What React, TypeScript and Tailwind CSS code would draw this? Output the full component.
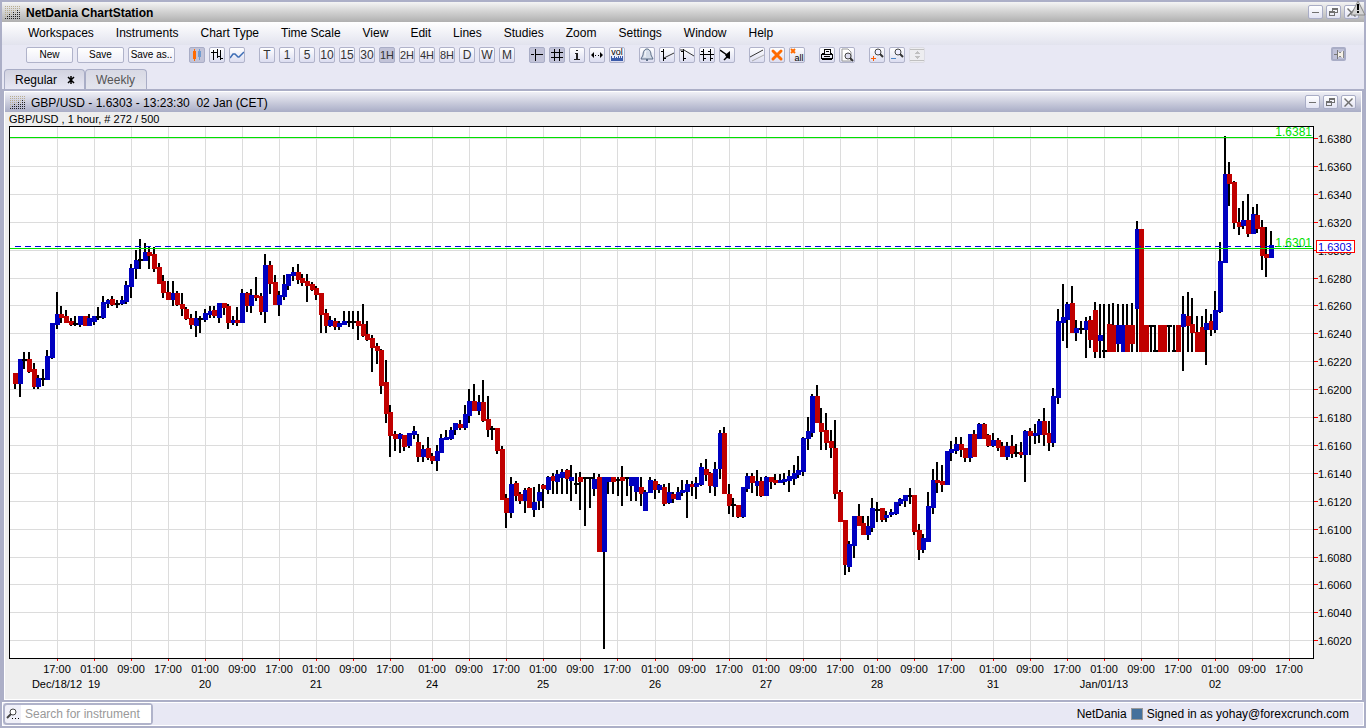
import { useState } from 'react';
import type { ReactNode } from 'react';
import clsx from 'clsx';

// [high, low, body top, body bottom, direction] in chart units, one per hour
type Candle = [number, number, number, number, number];

const candles: Candle[] = [
  [373, 389, 373, 384, -1], [359, 397, 359, 384, 1], [352, 369, 359, 361, 0], [352, 373, 359, 372, -1],
  [363, 389, 369, 387, -1], [375, 389, 378, 387, 1], [369, 386, 378, 380, 0], [350, 380, 356, 380, 1],
  [323, 359, 323, 358, 1], [292, 329, 314, 325, 1], [306, 323, 314, 318, -1], [310, 323, 316, 323, -1],
  [318, 326, 321, 325, -1], [316, 326, 323, 325, 0], [316, 327, 316, 325, 1], [316, 326, 316, 326, -1],
  [314, 326, 318, 326, 1], [316, 325, 316, 322, 1], [307, 320, 316, 318, 0], [296, 319, 302, 318, 1],
  [299, 308, 300, 304, 1], [296, 306, 299, 305, -1], [300, 308, 303, 305, 0], [296, 305, 300, 304, 1],
  [281, 304, 285, 302, 1], [264, 298, 268, 287, 1], [250, 279, 260, 269, 1], [239, 269, 259, 261, 0],
  [243, 261, 252, 261, 1], [247, 269, 252, 256, -1], [247, 272, 254, 269, -1], [263, 284, 267, 284, -1],
  [275, 298, 281, 293, -1], [281, 300, 292, 300, -1], [281, 306, 293, 300, 1], [291, 306, 293, 305, -1],
  [293, 316, 304, 309, -1], [307, 320, 309, 319, -1], [314, 329, 318, 325, -1], [311, 337, 318, 326, 1],
  [316, 333, 318, 320, 0], [309, 322, 313, 320, 1], [306, 318, 311, 315, 1], [306, 318, 310, 316, -1],
  [303, 323, 303, 318, 1], [303, 315, 303, 308, -1], [304, 329, 306, 323, -1], [316, 325, 320, 323, 1],
  [307, 326, 320, 323, -1], [289, 323, 293, 323, 1], [292, 312, 293, 306, -1], [289, 313, 295, 306, 1],
  [277, 301, 295, 298, -1], [293, 315, 296, 312, -1], [254, 323, 265, 312, 1], [261, 294, 265, 284, -1],
  [275, 305, 282, 305, -1], [291, 316, 295, 305, 1], [275, 300, 284, 297, 1], [274, 290, 274, 286, 1],
  [267, 281, 272, 276, 1], [264, 284, 272, 280, -1], [274, 286, 278, 283, -1], [274, 302, 281, 286, -1],
  [282, 291, 284, 290, -1], [286, 300, 288, 295, -1], [293, 333, 293, 315, -1], [309, 333, 313, 326, -1],
  [316, 327, 320, 326, 1], [318, 330, 321, 327, -1], [321, 330, 323, 327, 1], [311, 325, 321, 325, 1],
  [311, 327, 321, 323, 0], [311, 329, 321, 323, 0], [311, 340, 321, 326, -1], [304, 337, 324, 336, -1],
  [321, 341, 334, 340, -1], [335, 372, 338, 348, -1], [343, 364, 346, 351, -1], [349, 394, 350, 386, -1],
  [360, 423, 382, 414, -1], [405, 457, 412, 436, -1], [431, 451, 434, 439, -1], [433, 453, 434, 439, 1],
  [435, 451, 435, 447, -1], [433, 448, 433, 446, 1], [426, 439, 431, 435, 1], [434, 462, 442, 457, -1],
  [445, 462, 449, 457, 1], [437, 460, 448, 458, -1], [453, 464, 456, 461, -1], [445, 471, 451, 461, 1],
  [434, 453, 438, 453, 1], [430, 440, 437, 440, 1], [427, 440, 430, 439, 1], [423, 435, 423, 430, 1],
  [420, 430, 424, 428, -1], [405, 430, 414, 428, 1], [389, 423, 401, 416, 1], [384, 411, 401, 411, -1],
  [395, 415, 402, 411, 1], [380, 422, 402, 421, -1], [396, 437, 419, 430, -1], [426, 440, 428, 430, 0],
  [428, 454, 428, 451, -1], [446, 500, 449, 500, -1], [494, 528, 498, 513, -1], [477, 518, 484, 513, 1],
  [481, 501, 483, 496, -1], [492, 504, 494, 501, -1], [488, 513, 490, 501, 1], [487, 508, 488, 508, -1],
  [487, 517, 502, 510, 1], [484, 510, 492, 501, 1], [484, 508, 485, 489, -1], [476, 494, 477, 490, 1],
  [473, 494, 476, 481, -1], [470, 494, 474, 482, 1], [469, 494, 472, 478, 1], [469, 494, 470, 479, -1],
  [465, 501, 477, 481, 1], [473, 494, 483, 485, 0], [472, 510, 477, 482, -1], [477, 526, 477, 479, 0],
  [477, 508, 477, 479, 0], [473, 496, 479, 489, 1], [474, 552, 477, 552, -1], [477, 649, 477, 552, 1],
  [477, 494, 477, 482, 1], [477, 494, 477, 482, -1], [477, 496, 479, 481, 0], [466, 506, 477, 481, -1],
  [477, 496, 477, 479, 0], [477, 501, 477, 486, 1], [477, 501, 477, 492, 1], [477, 506, 487, 494, -1],
  [490, 511, 492, 511, 1], [477, 493, 480, 493, 1], [479, 499, 481, 490, -1], [484, 493, 485, 490, 1],
  [484, 506, 487, 504, -1], [483, 504, 492, 503, 1], [492, 503, 494, 499, -1], [487, 500, 492, 500, 1],
  [480, 496, 490, 493, 1], [480, 518, 484, 492, 1], [481, 496, 484, 487, -1], [477, 499, 483, 487, 1],
  [463, 486, 467, 485, 1], [459, 481, 469, 475, -1], [472, 493, 473, 486, -1], [462, 496, 469, 487, 1],
  [430, 479, 433, 469, 1], [427, 494, 433, 494, -1], [484, 514, 494, 506, -1], [498, 517, 504, 506, 0],
  [505, 518, 505, 517, -1], [487, 518, 487, 517, 1], [473, 492, 476, 489, 1], [473, 493, 476, 483, -1],
  [470, 496, 481, 486, 1], [477, 497, 481, 496, -1], [476, 496, 477, 496, 1], [477, 489, 477, 482, -1],
  [474, 485, 480, 483, -1], [474, 483, 480, 483, 1], [473, 485, 479, 482, 1], [470, 492, 476, 481, 1],
  [465, 485, 473, 479, 1], [456, 478, 470, 475, 1], [437, 476, 438, 472, 1], [417, 450, 431, 439, 1],
  [394, 437, 396, 433, 1], [385, 423, 396, 423, -1], [408, 450, 423, 432, -1], [413, 450, 430, 443, -1],
  [430, 458, 441, 448, -1], [420, 499, 448, 494, -1], [490, 522, 492, 522, -1], [520, 575, 520, 565, -1],
  [541, 572, 544, 567, 1], [516, 558, 516, 546, 1], [504, 526, 516, 526, -1], [516, 535, 523, 535, -1],
  [516, 540, 526, 535, 1], [498, 532, 508, 528, 1], [502, 522, 509, 511, 0], [508, 522, 508, 520, -1],
  [511, 522, 515, 518, 1], [509, 517, 512, 515, 1], [502, 515, 502, 514, 1], [498, 506, 499, 504, 1],
  [495, 507, 495, 501, 1], [488, 504, 495, 497, 0], [495, 535, 495, 532, -1], [524, 560, 530, 550, -1],
  [534, 553, 538, 550, 1], [492, 542, 506, 542, 1], [469, 514, 480, 508, 1], [462, 493, 480, 483, -1],
  [465, 492, 481, 485, -1], [451, 485, 451, 485, 1], [441, 461, 449, 453, 1], [437, 454, 444, 451, 1],
  [437, 457, 444, 450, -1], [448, 462, 448, 458, -1], [434, 462, 434, 458, 1], [430, 457, 434, 457, -1],
  [423, 439, 424, 439, 1], [423, 439, 424, 439, -1], [434, 447, 435, 446, -1], [433, 447, 440, 446, 1],
  [438, 451, 440, 448, -1], [442, 457, 446, 457, -1], [442, 460, 446, 457, 1], [435, 458, 446, 454, -1],
  [444, 457, 452, 454, 0], [442, 458, 452, 455, -1], [430, 482, 431, 455, 1], [428, 455, 431, 436, -1],
  [424, 444, 433, 436, 1], [419, 443, 421, 435, 1], [408, 446, 421, 435, -1], [421, 451, 433, 443, -1],
  [388, 447, 396, 443, 1], [309, 404, 321, 398, 1], [284, 341, 317, 323, 1], [302, 348, 304, 320, 1],
  [286, 333, 303, 333, -1], [320, 341, 328, 333, 1], [321, 334, 328, 330, 0], [317, 358, 321, 330, 1],
  [316, 348, 320, 340, -1], [302, 358, 310, 352, -1], [304, 358, 335, 341, 1], [304, 358, 350, 352, 0],
  [304, 352, 324, 352, -1], [303, 352, 325, 352, -1], [304, 352, 325, 344, 1], [304, 352, 325, 352, 1],
  [304, 352, 325, 352, -1], [303, 352, 325, 344, -1], [221, 352, 229, 309, 1], [229, 352, 229, 352, -1],
  [325, 352, 325, 352, -1], [325, 352, 325, 327, 0], [325, 352, 350, 352, 0], [325, 352, 325, 352, -1],
  [325, 352, 325, 352, -1], [325, 352, 325, 327, 0], [325, 352, 350, 352, 0], [325, 352, 325, 352, -1],
  [296, 371, 314, 327, 1], [292, 352, 316, 326, -1], [298, 352, 324, 333, -1], [316, 352, 332, 352, -1],
  [316, 352, 327, 352, -1], [309, 365, 323, 330, 1], [314, 336, 321, 330, -1], [291, 333, 310, 330, 1],
  [242, 313, 261, 312, 1], [136, 263, 174, 263, 1], [162, 206, 174, 184, -1], [181, 229, 182, 223, -1],
  [208, 235, 222, 227, -1], [201, 229, 220, 226, 1], [194, 237, 220, 234, -1], [207, 234, 214, 234, 1],
  [204, 233, 215, 229, -1], [220, 270, 227, 256, -1], [227, 277, 254, 258, -1], [231, 258, 245, 258, 1],
];

const prices = [
  '1.6380', '1.6360', '1.6340', '1.6320', '1.6300', '1.6280', '1.6260', '1.6240', '1.6220', '1.6200',
  '1.6180', '1.6160', '1.6140', '1.6120', '1.6100', '1.6080', '1.6060', '1.6040', '1.6020',
];

const timeTicks = [
  57, 94, 131, 168, 205, 242, 279, 316, 353, 390, 432, 469, 506, 543, 580, 617, 655, 692, 729, 766, 803,
  840, 877, 914, 951, 993, 1030, 1067, 1104, 1141, 1178, 1215, 1252, 1289,
];
const hours = ['17:00', '01:00', '09:00'];

const dates = [
  { x: 57, label: 'Dec/18/12' },
  { x: 94, label: '19' },
  { x: 205, label: '20' },
  { x: 316, label: '21' },
  { x: 432, label: '24' },
  { x: 543, label: '25' },
  { x: 655, label: '26' },
  { x: 766, label: '27' },
  { x: 877, label: '28' },
  { x: 993, label: '31' },
  { x: 1104, label: 'Jan/01/13' },
  { x: 1215, label: '02' },
];

const priceY = (i: number) => Math.round(138 + i * 27.9);
const candleX = (i: number) => Math.round(13 + i * 4.635);
const fills: Record<string, string> = { '1': '#0000c0', '-1': '#c00000', '0': '#000' };

const menus = [
  'Workspaces', 'Instruments', 'Chart Type', 'Time Scale', 'View', 'Edit',
  'Lines', 'Studies', 'Zoom', 'Settings', 'Window', 'Help',
];

const timeScales = ['T', '1', '5', '10', '15', '30', '1H', '2H', '4H', '8H', 'D', 'W', 'M'];

type Tool = { name: string; icon: ReactNode; pressed?: boolean; disabled?: boolean };

const chartTypes: Tool[] = [
  {
    name: 'Candlesticks',
    pressed: true,
    icon: (
      <>
        <path d="M4 4h1V2h1v2h1v8H6v2H5v-2H4z" fill="#ff6a00" />
        <path d="M9 4h1V2h1v2h1v6h-1v3h-1v-3H9z" fill="#6f9bd0" />
      </>
    ),
  },
  { name: 'Bars', icon: <path d="M4 3h1v10H4zM2 5h2v1H2zM5 5h4v1H5zM8 2h1v9H8zM9 9h2v1H9zM11 3h1v10h-1zM12 11h2v1h-2z" fill="#000" /> },
  { name: 'Line', icon: <path d="M1 11l3-4h2l3 3h1l5-5" fill="none" stroke="#3d6db5" strokeWidth="1.500" shapeRendering="auto" /> },
];

const viewTools: Tool[] = [
  { name: 'Crosshair', pressed: true, icon: <path d="M6 2h1v12H6zM2 7h3v1H2zM6 7h8v1H6z" fill="#000" /> },
  { name: 'Grid', pressed: true, icon: <path d="M5 2h1v12H5zM10 2h1v12h-1zM2 5h12v1H2zM2 10h12v1H2z" fill="#000" /> },
  { name: 'Info', icon: <path d="M7 3h2v1H7zM6 6h3v6h2v1H5v-1h2V7H6z" fill="#222" /> },
  { name: 'Fit width', icon: <path d="M2 8l3-3v6zM14 8l-3-3v6zM6 8h1v1H6zM9 8h1v1H9z" fill="#000" shapeRendering="auto" /> },
  {
    name: 'Volume',
    icon: (
      <>
        <text x="8" y="8" textAnchor="middle" fontSize="9">vol</text>
        <path d="M2 14V9h1v2h2V9h1v2h1v-1h1v1h1V9h1v2h1V9h1v2h1V9h1v5z" fill="#3b5bab" />
      </>
    ),
  },
];

const lineTools: Tool[] = [
  {
    name: 'Alert',
    icon: (
      <g shapeRendering="auto">
        <path d="M7 12h2v2H7z" fill="#5d6e86" />
        <path d="M7 2h2c2 1 3 3 3 6l2 4H2l2-4c0-3 1-5 3-6z" fill="#d3dce8" stroke="#5d6e86" />
        <path d="M7 4c-1 2-1 4-1 6" fill="none" stroke="#fff" />
      </g>
    ),
  },
  { name: 'Trend up', icon: <><path d="M4 2h1v12H4zM2 4h2v1H2zM5 11h2v1H5z" fill="#000" /><path d="M5 11l10-5" stroke="#333" shapeRendering="auto" /></> },
  { name: 'Trend down', icon: <><path d="M4 2h1v12H4zM2 4h2v1H2zM5 11h2v1H5z" fill="#000" /><path d="M1 3h4l10 6" fill="none" stroke="#333" shapeRendering="auto" /></> },
  { name: 'Horizontal line', icon: <path d="M1 7h14v1H1zM4 2h1v12H4zM2 4h2v1H2zM5 11h2v1H5zM11 2h1v12h-1zM9 4h2v1H9zM12 11h2v1h-2z" fill="#000" /> },
  { name: 'Arrow', icon: <><path d="M1 3l7 5M5 13l4-4" stroke="#000" strokeWidth="1.500" shapeRendering="auto" /><path d="M11 4v8l-3-1-2-3z" fill="#000" shapeRendering="auto" /></> },
];

const editTools: Tool[] = [
  { name: 'Parallel lines', icon: <g shapeRendering="auto"><path d="M1 10L14 3" stroke="#333" /><path d="M3 14l12-6" stroke="#aaa" /></g> },
  { name: 'Delete', icon: <path d="M4 4l8 8M12 4l-8 8" stroke="#ff6a00" strokeWidth="3" strokeLinecap="round" shapeRendering="auto" /> },
  {
    name: 'Delete all',
    icon: (
      <>
        <path d="M2 2l4 4M6 2L2 6" stroke="#ff6a00" strokeWidth="2" shapeRendering="auto" />
        <text x="10" y="14" textAnchor="middle" fontSize="9">all</text>
      </>
    ),
  },
];

const printTools: Tool[] = [
  {
    name: 'Print',
    icon: (
      <path
        d="M5 2h7v4h1v1h1v5h-1v1H3v-1H2V7h1V6h2zM6 3v4h5V3zM3 8v3h10V8zM7 4h3v1H7zM5 9h6v1H5z"
        fill="#000"
        fillRule="evenodd"
      />
    ),
  },
  {
    name: 'Print preview',
    icon: (
      <g shapeRendering="auto">
        <path d="M3 2h6l3 3v9H3z" fill="#fff" stroke="#999" />
        <circle cx="9" cy="9" r="3" fill="#dde" stroke="#444" />
        <path d="M11 11l3 3" stroke="#333" strokeWidth="2" />
      </g>
    ),
  },
];

const zoomGlass = (
  <g shapeRendering="auto">
    <circle cx="9" cy="5" r="3" fill="#eef" stroke="#444" />
    <path d="M11 7l3 3" stroke="#333" strokeWidth="2" />
  </g>
);

const zoomTools: Tool[] = [
  { name: 'Zoom in', icon: <>{zoomGlass}<path d="M4 9h1v2h2v1H5v2H4v-2H2v-1h2z" fill="#ff5a00" /></> },
  { name: 'Zoom out', icon: <>{zoomGlass}<path d="M2 11h5v1H2z" fill="#4a86c8" /></> },
  {
    name: 'Reset zoom',
    disabled: true,
    icon: <path d="M1 2h14v1H1zM1 13h14v1H1zM8 4l3 3H5zM8 12l3-3H5z" fill="#c0c0c0" />,
  },
];

const toolButton = 'flex h-4 w-4 shrink-0 items-center justify-center overflow-hidden rounded-xs border';

function ToolButton({ tool }: { tool: Tool }) {
  return (
    <button
      aria-label={tool.name}
      disabled={tool.disabled}
      className={clsx(
        toolButton,
        tool.disabled && 'border-[#dcdce4] bg-[#ededf0]',
        tool.pressed && 'border-[#a9adc6] bg-[#c2c3d8]',
        !tool.disabled && !tool.pressed && 'border-[#b0b3ca] bg-linear-to-b from-white to-[#dcddf0]'
      )}
    >
      <svg viewBox="1 1 14 14" className="h-3.5 w-3.5 shrink-0" shapeRendering="crispEdges">
        {tool.icon}
      </svg>
    </button>
  );
}

function ToolGroup({ tools }: { tools: Tool[] }) {
  return (
    <div className="flex gap-1">
      {tools.map((tool) => (
        <ToolButton key={tool.name} tool={tool} />
      ))}
    </div>
  );
}

function DotLogo() {
  const levels = [1, 2, 3, 2, 4, 3, 5, 4];
  return (
    <svg viewBox="0 0 16 14" className="h-3.5 w-4 shrink-0" shapeRendering="crispEdges">
      {levels.map((level, col) =>
        [0, 1, 2, 3, 4, 5, 6].map((row) => (
          <rect
            key={`${col}-${row}`}
            x={col * 2}
            y={row * 2}
            width="1"
            height="1"
            fill={6 - row < level ? '#222' : '#b8ad90'}
          />
        ))
      )}
    </svg>
  );
}

function WindowButtons() {
  const icons = [
    { name: 'Minimize', d: 'M4 7h7v1H4z' },
    { name: 'Restore', d: 'M6 3h6v5H9v3H3V6h3zM7 5v1h2v1h2V5zM4 8v2h4V8z' },
    { name: 'Close', d: 'M4 3l3.500 3.500L11 3l1 1-3.500 3.500L12 11l-1 1-3.500-3.500L4 12l-1-1 3.500-3.500L3 4z' },
  ];
  return (
    <div className="flex gap-[3px]">
      {icons.map((icon) => (
        <button
          key={icon.name}
          aria-label={icon.name}
          className="flex h-3.5 w-[15px] items-center justify-center overflow-hidden rounded-xs border border-[#a9adc6] bg-linear-to-b from-white to-[#e2e3f3]"
        >
          <svg viewBox="0 0 15 15" className="h-[15px] w-[15px] shrink-0">
            <path d={icon.d} fill="#707070" fillRule="evenodd" />
          </svg>
        </button>
      ))}
    </div>
  );
}

function PriceChart() {
  return (
    <svg
      viewBox="5 112 1356 587"
      className="block h-auto w-full"
      fontFamily="'Liberation Sans', Arial, sans-serif"
      fontSize="11"
      shapeRendering="crispEdges"
    >
      <text x="9" y="123">GBP/USD , 1 hour, # 272 / 500</text>
      <rect x="9" y="126" width="1305" height="533" fill="#000" />
      <rect x="10" y="127" width="1303" height="531" fill="#fff" />

      {prices.map((price, i) => (
        <g key={price}>
          <rect x="10" y={priceY(i)} width="1303" height="1" fill="#dcdcdc" />
          <rect x="1314" y={priceY(i)} width="4" height="1" fill="#f00" />
          <text x="1318" y={priceY(i) + 5}>{price}</text>
        </g>
      ))}
      {timeTicks.map((x, i) => (
        <g key={x}>
          <rect x={x} y="127" width="1" height="531" fill="#dcdcdc" />
          <rect x={x} y="659" width="1" height="2" fill="#f00" />
          <text x={x} y="673" textAnchor="middle">{hours[i % 3]}</text>
        </g>
      ))}
      {dates.map((date) => (
        <text key={date.label} x={date.x} y="688" textAnchor="middle">{date.label}</text>
      ))}

      {candles.map(([high, low, top, bottom, dir], i) => (
        <g key={i}>
          <rect x={candleX(i) + 1} y={high} width="2" height={low - high} fill="#000" />
          <rect x={candleX(i)} y={top} width="5" height={bottom - top} fill={fills[dir]} />
        </g>
      ))}

      <path d="M15 246.500H1313" stroke="#0000e0" strokeDasharray="6 4" />
      <rect x="10" y="137" width="1303" height="1" fill="#00e000" />
      <rect x="10" y="248" width="1303" height="1" fill="#00e000" />
      <g fontSize="12" fill="#00e000" textAnchor="end">
        <text x="1312" y="136">1.6381</text>
        <text x="1312" y="247">1.6301</text>
      </g>
      <rect x="1316.500" y="240.500" width="38" height="12" fill="#fff" stroke="#f00" />
      <text x="1318" y="251" fill="#0000e0">1.6303</text>
    </svg>
  );
}

export default function App() {
  const [scale, setScale] = useState('1H');
  const [query, setQuery] = useState('');

  return (
    <div className="relative flex min-h-screen flex-col bg-[#acafc7] p-0.5 font-['Liberation_Sans',Arial,sans-serif] text-xs text-black">
      <header className="flex h-5 items-center justify-between bg-linear-to-b from-[#f4f4f4] to-[#b0b0b0] pr-[5px] pl-[3px]">
        <div className="flex items-center gap-[5px] pt-0.5">
          <DotLogo />
          <h1 className="font-bold">NetDania ChartStation</h1>
        </div>
        <WindowButtons />
      </header>
      <svg viewBox="0 0 16 16" className="absolute top-0 right-0 h-4 w-4" aria-label="Warning">
        <path d="M8 1l7 14H1z" fill="#d4d4d4" stroke="#888" strokeLinejoin="round" />
        <path d="M7 4h2v6H7zM7 11h2v2H7z" fill="#000" />
      </svg>

      <nav className="flex h-[23px] items-center gap-[22px] bg-linear-to-b from-white to-[#e2e3ee] pb-0.5 pl-[26px]">
        {menus.map((menu) => (
          <button key={menu}>{menu}</button>
        ))}
      </nav>

      <div className="flex h-6 items-start gap-3.5 bg-[#e8e8f4] pt-0.5 pl-6">
        <div className="flex gap-1">
          {['New', 'Save', 'Save as..'].map((label) => (
            <button
              key={label}
              className="flex h-4 w-[47px] items-center justify-center rounded-xs border border-[#b0b3ca] bg-linear-to-b from-white to-[#eeeef8] text-[10px] whitespace-nowrap"
            >
              {label}
            </button>
          ))}
        </div>
        <ToolGroup tools={chartTypes} />
        <div className="flex gap-1">
          {timeScales.map((label) => (
            <button
              key={label}
              onClick={() => setScale(label)}
              className={clsx(
                toolButton,
                'text-[#333]',
                label.endsWith('H') ? 'text-[11px]' : 'text-xs',
                label === scale ? 'border-[#a9adc6] bg-[#c2c3d8]' : 'border-[#b0b3ca] bg-linear-to-b from-white to-[#dcddf0]'
              )}
            >
              {label}
            </button>
          ))}
        </div>
        <ToolGroup tools={viewTools} />
        <ToolGroup tools={lineTools} />
        <ToolGroup tools={editTools} />
        <ToolGroup tools={printTools} />
        <ToolGroup tools={zoomTools} />
        <button aria-label="Pin toolbar" className="mr-[18px] ml-auto flex h-3.5 w-[15px] items-center justify-center rounded-xs bg-[#a9adc6]">
          <svg viewBox="0 0 15 14" className="h-3.5 w-[15px]" shapeRendering="crispEdges">
            <path d="M2 2h11v10H2z" fill="#bfc1d8" />
            <path d="M3 7h3v1H3zM6 3h1v9H6z" fill="#777" />
            <path d="M7 5h1v1h2V5h1V4h1v7h-1v-1h-1V9H8v1H7z" fill="#f4f0e6" />
            <path d="M8 5h2v1H8zM8 9h2v1H8zM12 4h1v7h-1z" fill="#888" />
          </svg>
        </button>
      </div>

      <div className="flex h-5 bg-[#e8e8f4] pl-0.5">
        <button className="flex w-[81px] items-center gap-2.5 rounded-t-sm border border-b-0 border-[#a9adc6] bg-linear-to-b from-[#d2d3e0] to-[#e8e8f4] pl-2.5">
          Regular
          <svg viewBox="0 0 8 8" className="h-2 w-2" aria-label="Close tab">
            <path d="M4 0v8M1 1l6 6M7 1L1 7" stroke="#000" strokeWidth="1.500" />
          </svg>
        </button>
        <button className="flex w-[62px] items-center rounded-t-sm border border-b-0 border-[#a9adc6] bg-linear-to-b from-[#d8d9e4] to-[#e4e5ee] pl-2.5 text-[#555]">
          Weekly
        </button>
      </div>

      <main className="mx-0.5 mt-0.5 border border-white bg-[#eee]">
        <div className="flex h-5 items-center justify-between bg-linear-to-b from-[#f0f0f6] to-[#a9adc6] px-[5px]">
          <div className="flex items-center gap-[5px] pt-0.5">
            <DotLogo />
            <h2 className="whitespace-pre">GBP/USD - 1.6303 - 13:23:30  02 Jan (CET)</h2>
          </div>
          <WindowButtons />
        </div>
        <PriceChart />
      </main>

      <footer className="mt-0.5 flex h-6 items-center justify-between border border-white bg-[#e8e8f4] pr-3.5">
        <label className="flex h-[22px] w-[150px] items-center rounded-sm border-2 border-[#b0b3ca] bg-[#f0f0f8]">
          <svg viewBox="0 0 14 14" className="mx-px h-3.5 w-3.5 shrink-0">
            <circle cx="7" cy="5" r="3" fill="#fff" stroke="#444" />
            <path d="M5 7l-4 4" stroke="#444" strokeWidth="2" />
            <path d="M6 11h1v1H6zM9 11h1v1H9zM12 11h1v1h-1z" fill="#000" />
          </svg>
          <input
            type="text"
            aria-label="Search for instrument"
            placeholder="Search for instrument"
            value={query}
            onChange={(e) => setQuery(e.target.value)}
            className="h-full w-full min-w-0 bg-white pl-1 outline-none placeholder:text-[#999]"
          />
        </label>
        <div className="flex items-center gap-1">
          <span>NetDania</span>
          <span className="h-3 w-3 border border-[#999] bg-[#44709c]" />
          <span>Signed in as yohay@forexcrunch.com</span>
        </div>
      </footer>
    </div>
  );
}
